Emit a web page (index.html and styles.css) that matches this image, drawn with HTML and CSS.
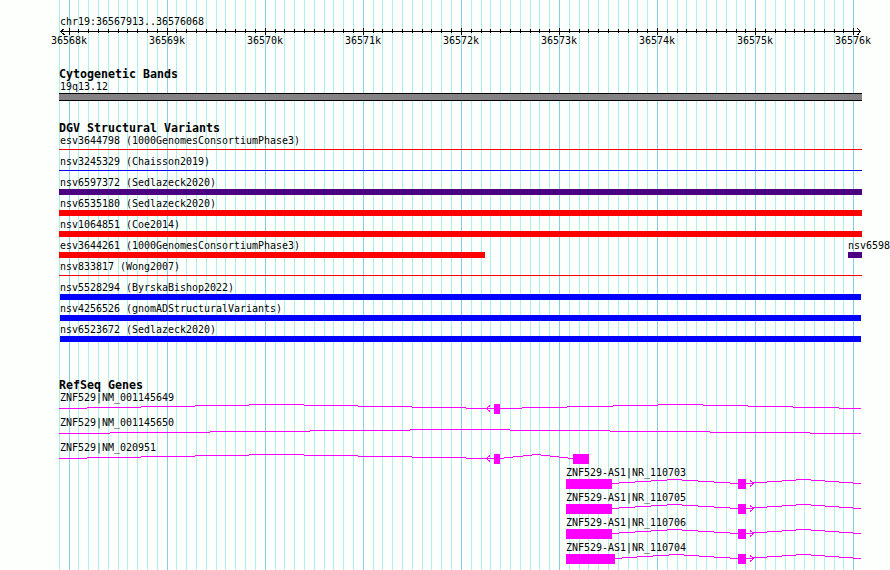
FILE: index.html
```
<!DOCTYPE html>
<html lang="en">
<head>
    <meta charset="UTF-8">
    <meta name="viewport" content="width=device-width, initial-scale=1.0">
    <title>chr19:36567913..36576068</title>
    <link rel="stylesheet" href="styles.css">
</head>
<body>
    <div class="browser">
        <!-- vertical grid, filled in by grid.js -->
        <svg class="grid" width="890" height="570">
            <path id="gridMinor" class="grid-minor"/>
            <path id="gridMajor" class="grid-major"/>
        </svg>

        <!-- ruler -->
        <div class="ruler">
            <div class="label">chr19:36567913..36576068</div>
            <svg class="axis" width="890" height="9">
                <path d="M60 4.5H861"/>
                <path d="M64.5 1.5L60.5 4.5L64.5 8M857.5 1.5L860.5 4.5L857.5 8"/>
                <path id="ticks"/>
            </svg>
            <div class="scale">
                <span>36568k</span><span>36569k</span><span>36570k</span><span>36571k</span><span>36572k</span><span>36573k</span><span>36574k</span><span>36575k</span><span>36576k</span>
            </div>
        </div>

        <!-- cytobands -->
        <div class="track cyto">
            <h2>Cytogenetic Bands</h2>
            <div class="label">19q13.12</div>
            <div class="band"></div>
        </div>

        <!-- structural variants -->
        <div class="track variants">
            <h2>DGV Structural Variants</h2>
            <div class="row"><div class="feature"><div class="label">esv3644798 (1000GenomesConsortiumPhase3)</div><div class="bar thin loss"></div></div></div>
            <div class="row"><div class="feature"><div class="label">nsv3245329 (Chaisson2019)</div><div class="bar thin gain"></div></div></div>
            <div class="row"><div class="feature"><div class="label">nsv6597372 (Sedlazeck2020)</div><div class="bar other"></div></div></div>
            <div class="row"><div class="feature"><div class="label">nsv6535180 (Sedlazeck2020)</div><div class="bar loss"></div></div></div>
            <div class="row"><div class="feature"><div class="label">nsv1064851 (Coe2014)</div><div class="bar loss"></div></div></div>
            <div class="row">
                <div class="feature partial"><div class="label">esv3644261 (1000GenomesConsortiumPhase3)</div><div class="bar loss"></div></div>
                <div class="feature edge"><div class="label">nsv6598</div><div class="bar other"></div></div>
            </div>
            <div class="row"><div class="feature"><div class="label">nsv833817 (Wong2007)</div><div class="bar thin loss"></div></div></div>
            <div class="row"><div class="feature"><div class="label">nsv5528294 (ByrskaBishop2022)</div><div class="bar gain inner"></div></div></div>
            <div class="row"><div class="feature"><div class="label">nsv4256526 (gnomADStructuralVariants)</div><div class="bar gain inner"></div></div></div>
            <div class="row"><div class="feature"><div class="label">nsv6523672 (Sedlazeck2020)</div><div class="bar gain inner"></div></div></div>
        </div>

        <!-- genes -->
        <div class="track genes">
            <h2>RefSeq Genes</h2>
            <div class="gene">
                <div class="label">ZNF529|NM_001145649</div>
                <svg width="890" height="12">
                    <path d="M59 5.5h28m0-1h54m0-1h54m0-1h54m0-1h55m0 1h54m0 1h54m0 1h54m0 1h28"/>
                    <path d="M500 5.5h22m0-1h45m0-1h46m0-1h45m0-1h45m0 1h45m0 1h45m0 1h46m0 1h22"/>
                    <path d="M490 2.5L486.5 5.5L490 8.5"/>
                    <rect x="494" y="1" width="6" height="10"/>
                </svg>
            </div>
            <div class="gene">
                <div class="label">ZNF529|NM_001145650</div>
                <svg width="890" height="12">
                    <path d="M59 5.5h51m0-1h100m0-1h100m0-1h100m0-1h100m0 1h100m0 1h100m0 1h100m0 1h51"/>
                </svg>
            </div>
            <div class="gene">
                <div class="label">ZNF529|NM_020951</div>
                <svg width="890" height="12">
                    <path d="M59 5.5h28m0-1h54m0-1h54m0-1h54m0-1h55m0 1h54m0 1h54m0 1h54m0 1h28"/>
                    <path d="M500 5.5h4m0-1h9m0-1h10m0-1h9m0-1h9m0 1h9m0 1h9m0 1h9m0 1h5"/>
                    <path d="M490 2.5L486.5 5.5L490 8.5"/>
                    <rect x="494" y="1" width="6" height="10"/>
                    <rect x="573" y="1" width="16" height="10"/>
                </svg>
            </div>
            <div class="gene antisense">
                <div class="label">ZNF529-AS1|NR_110703</div>
                <svg width="890" height="12">
                    <path d="M612 5.5h7m0-1h16m0-1h16m0-1h16m0-1h15m0 1h16m0 1h16m0 1h16m0 1h8"/>
                    <path d="M746 5.5h8m-2-1h15m0-1h15m0-1h14m0-1h15m0 1h14m0 1h14m0 1h14m0 1h8"/>
                    <path d="M750 2.5L753.5 5.5L750 8.5"/>
                    <rect x="566" y="1" width="46" height="10"/>
                    <rect x="738" y="1" width="8" height="10"/>
                </svg>
            </div>
            <div class="gene antisense">
                <div class="label">ZNF529-AS1|NR_110705</div>
                <svg width="890" height="12">
                    <path d="M612 5.5h7m0-1h16m0-1h16m0-1h16m0-1h15m0 1h16m0 1h16m0 1h16m0 1h8"/>
                    <path d="M746 5.5h8m-2-1h15m0-1h15m0-1h14m0-1h15m0 1h14m0 1h14m0 1h14m0 1h8"/>
                    <path d="M750 2.5L753.5 5.5L750 8.5"/>
                    <rect x="566" y="1" width="46" height="10"/>
                    <rect x="738" y="1" width="8" height="10"/>
                </svg>
            </div>
            <div class="gene antisense">
                <div class="label">ZNF529-AS1|NR_110706</div>
                <svg width="890" height="12">
                    <path d="M612 5.5h7m0-1h16m0-1h16m0-1h16m0-1h15m0 1h16m0 1h16m0 1h16m0 1h8"/>
                    <path d="M746 5.5h8m-2-1h15m0-1h15m0-1h14m0-1h15m0 1h14m0 1h14m0 1h14m0 1h8"/>
                    <path d="M750 2.5L753.5 5.5L750 8.5"/>
                    <rect x="566" y="1" width="46" height="10"/>
                    <rect x="738" y="1" width="8" height="10"/>
                </svg>
            </div>
            <div class="gene antisense">
                <div class="label">ZNF529-AS1|NR_110704</div>
                <svg width="890" height="12">
                    <path d="M615 5.5h7m0-1h15m0-1h16m0-1h16m0-1h15m0 1h15m0 1h15m0 1h16m0 1h8"/>
                    <path d="M746 5.5h8m-2-1h15m0-1h15m0-1h14m0-1h15m0 1h14m0 1h14m0 1h14m0 1h8"/>
                    <path d="M750 2.5L753.5 5.5L750 8.5"/>
                    <rect x="566" y="1" width="49" height="10"/>
                    <rect x="738" y="1" width="8" height="10"/>
                </svg>
            </div>
        </div>
    </div>
    <script src="grid.js"></script>
</body>
</html>
```
FILE: styles.css
```
* {
    margin: 0;
    padding: 0;
    box-sizing: border-box;
}

body {
    background: #fdfffc;
    color: #000;
    font-family: "DejaVu Sans Mono", "Liberation Mono", monospace;
    font-size: 10px;
    overflow: hidden;
}

.browser {
    position: relative;
    width: 890px;
    height: 570px;
    overflow: hidden;
}

svg {
    display: block;
    fill: none;
    shape-rendering: crispEdges;
}

/* grid sits behind all tracks */
.grid {
    position: absolute;
    top: 0;
    left: 0;
    z-index: -1;
}

.grid-minor {
    stroke: #afeeee;
}

.grid-major {
    stroke: #87ceeb;
}

.label {
    height: 13px;
    line-height: 13px;
    padding-left: 1px;
    font-size: 9.97px;
    white-space: pre;
}

h2 {
    height: 13px;
    line-height: 13px;
    font-size: 11.63px;
    font-weight: bold;
    white-space: pre;
}

/* ruler */
.ruler {
    height: 68px;
    padding-top: 15px;
}

.ruler .label {
    margin-left: 59px;
    height: 12px;
}

.axis {
    stroke: #000;
}

.scale {
    display: flex;
    padding-left: 20px;
    margin-top: -2px;
    line-height: 13px;
}

.scale span {
    flex: none;
    width: 98px;
    text-align: center;
}

/* tracks */
.track h2 {
    margin-left: 59px;
}

.cyto {
    height: 54px;
}

.cyto .label {
    margin-left: 59px;
    margin-top: -1px;
}

.band {
    width: 803px;
    height: 8px;
    margin-left: 59px;
    background: #848284;
    border-top: 1px solid #000;
    border-bottom: 1px solid #000;
}

.variants {
    height: 257px;
}

.row {
    display: flex;
    height: 21px;
    margin-left: 59px;
}

.variants h2,
.genes h2 {
    height: 12px;
}

.feature {
    width: 803px;
    flex: none;
}

.bar {
    height: 6px;
}

.thin {
    height: 1px;
    margin-top: 2px;
}

.inner {
    margin-left: 1px;
    margin-right: 1px;
}

.loss {
    background: #f00;
}

.gain {
    background: #00f;
}

.other {
    background: #4b0082;
}

.partial {
    width: 789px;
}

.partial .bar {
    width: 426px;
}

.edge {
    width: 14px;
}

.edge .label {
    padding-left: 0;
}

/* genes */
.gene {
    height: 25px;
}

.gene .label {
    height: 12px;
    margin-left: 59px;
}

.antisense .label {
    margin-left: 565px;
}

.gene path {
    stroke: #f0f;
}

.gene rect {
    fill: #f0f;
}
```
FILE: grid.js
```
// one line per 100 bp, a major one every 1000 bp
const origin = 69.03;
const step = 9.809;

let minor = '';
let major = '';
let ticks = '';

for (let n = -1; n <= 80; n++) {
    const x = Math.floor(origin + step * n) + 0.5;
    if (n % 10 === 0) {
        major += `M${x} 0V570`;
        ticks += `M${x} 1V8`;
    } else {
        minor += `M${x} 0V570`;
        if (n > 0) ticks += `M${x} 2V6`;
    }
}

document.getElementById('gridMinor').setAttribute('d', minor);
document.getElementById('gridMajor').setAttribute('d', major);
document.getElementById('ticks').setAttribute('d', ticks);
```
